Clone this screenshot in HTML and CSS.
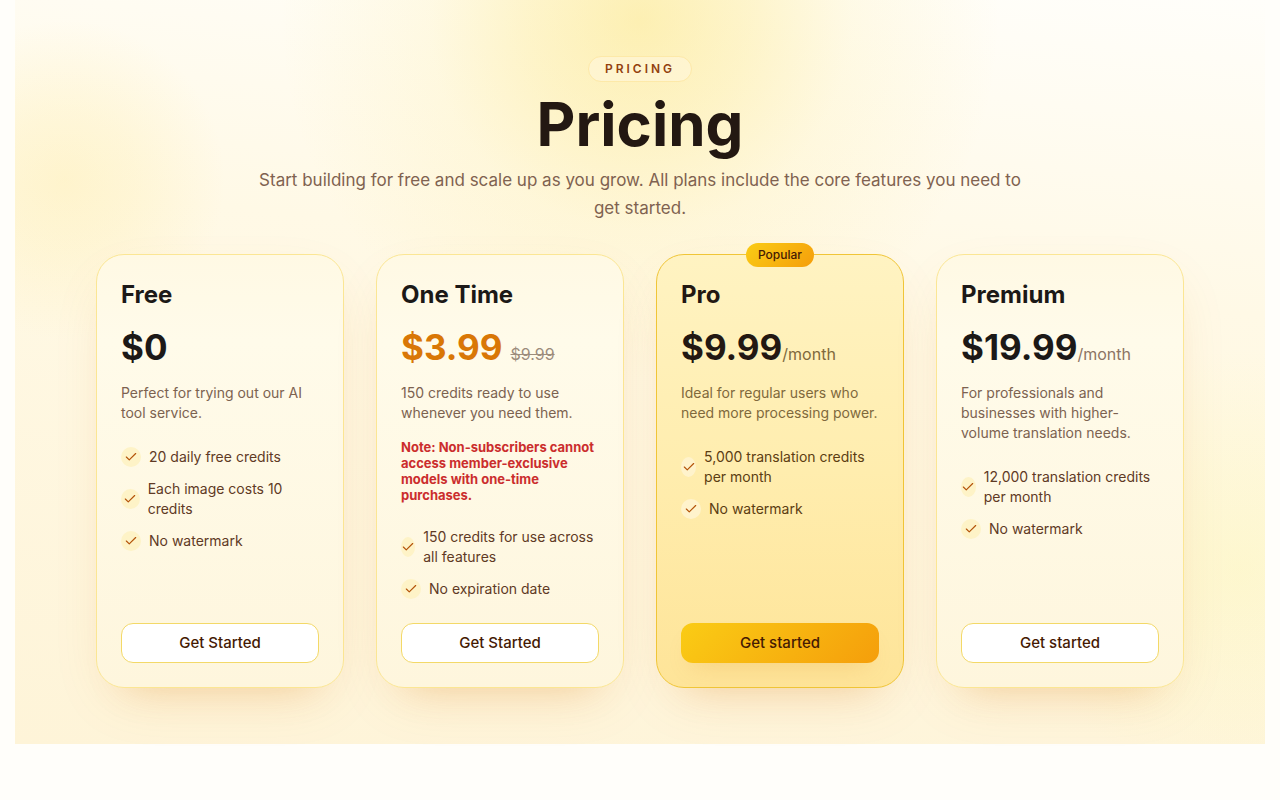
FILE: index.html
```html
<!DOCTYPE html>
<html lang="en">
<head>
  <meta charset="UTF-8">
  <meta name="viewport" content="width=device-width, initial-scale=1.0">
  <title>Pricing</title>
  <link rel="stylesheet" href="styles.css">
</head>
<body>
  <svg class="sprite" aria-hidden="true">
    <symbol id="check" viewBox="0 0 24 24">
      <path d="M20 6 9 17l-5-5" fill="none" stroke="currentColor" stroke-width="2" stroke-linecap="round" stroke-linejoin="round"/>
    </symbol>
  </svg>

  <section class="pricing" id="pricing">
    <header class="pricing-header">
      <span class="eyebrow">PRICING</span>
      <h1>Pricing</h1>
      <p>Start building for free and scale up as you grow. All plans include the core features you need to get started.</p>
    </header>

    <div class="plans">
      <article class="plan">
        <h2>Free</h2>
        <div class="price"><strong>$0</strong></div>
        <p class="description">Perfect for trying out our AI tool service.</p>
        <ul class="features">
          <li><span class="tick"><svg><use href="#check"/></svg></span><span>20 daily free credits</span></li>
          <li><span class="tick"><svg><use href="#check"/></svg></span><span>Each image costs 10 credits</span></li>
          <li><span class="tick"><svg><use href="#check"/></svg></span><span>No watermark</span></li>
        </ul>
        <button type="button" class="btn">Get Started</button>
      </article>

      <article class="plan">
        <h2>One Time</h2>
        <div class="price sale"><strong>$3.99</strong><del>$9.99</del></div>
        <p class="description">150 credits ready to use whenever you need them.</p>
        <p class="note">Note: Non-subscribers cannot access member-exclusive models with one-time purchases.</p>
        <ul class="features">
          <li><span class="tick"><svg><use href="#check"/></svg></span><span>150 credits for use across all features</span></li>
          <li><span class="tick"><svg><use href="#check"/></svg></span><span>No expiration date</span></li>
        </ul>
        <button type="button" class="btn">Get Started</button>
      </article>

      <article class="plan featured">
        <span class="badge">Popular</span>
        <h2>Pro</h2>
        <div class="price"><strong>$9.99</strong><span class="period">/month</span></div>
        <p class="description">Ideal for regular users who need more processing power.</p>
        <ul class="features">
          <li><span class="tick"><svg><use href="#check"/></svg></span><span>5,000 translation credits per month</span></li>
          <li><span class="tick"><svg><use href="#check"/></svg></span><span>No watermark</span></li>
        </ul>
        <button type="button" class="btn btn-primary">Get started</button>
      </article>

      <article class="plan">
        <h2>Premium</h2>
        <div class="price"><strong>$19.99</strong><span class="period">/month</span></div>
        <p class="description">For professionals and businesses with higher-volume translation needs.</p>
        <ul class="features">
          <li><span class="tick"><svg><use href="#check"/></svg></span><span>12,000 translation credits per month</span></li>
          <li><span class="tick"><svg><use href="#check"/></svg></span><span>No watermark</span></li>
        </ul>
        <button type="button" class="btn">Get started</button>
      </article>
    </div>
  </section>
</body>
</html>
```

FILE: styles.css
```css
* {
  box-sizing: border-box;
}
body {
  margin: 0;
  padding: 0 15px 56px;
  font-family: Inter, 'Liberation Sans', sans-serif;
  color: #1c1917;
  background: #fffefa;
}
h1, h2, p, ul {
  margin: 0;
  padding: 0;
}
.sprite {
  display: none;
}

/* Section */
.pricing {
  padding: 56px 24px;
  background:
    radial-gradient(circle at 50% 20px, rgba(250, 220, 80, 0.4), rgba(250, 220, 80, 0.26) 110px, rgba(250, 220, 80, 0.1) 210px, transparent 360px),
    radial-gradient(circle at 50px 180px, rgba(253, 230, 138, 0.28), rgba(253, 230, 138, 0.18) 70px, transparent 160px),
    radial-gradient(circle at 98% 570px, rgba(250, 248, 150, 0.24), transparent 220px),
    linear-gradient(186deg, #fffefa 0%, #fff9e6 36%, #fef4d8 100%);
}
.pricing-header {
  display: flex;
  flex-direction: column;
  align-items: center;
  gap: 12px;
  max-width: 780px;
  margin: 0 auto 32px;
  text-align: center;
}
.eyebrow {
  padding: 4px 16px;
  border: 1px solid #fde9a8;
  border-radius: 13px;
  background: rgba(255, 247, 220, 0.6);
  color: #92400e;
  font-size: 12px;
  line-height: 16px;
  font-weight: 600;
  letter-spacing: 3px;
}
.pricing-header h1 {
  font-size: 60px;
  line-height: 60px;
  font-weight: 700;
  color: #231812;
}
.pricing-header p {
  font-size: 17px;
  line-height: 28px;
  color: #7f6250;
}

/* Plan cards */
.plans {
  display: grid;
  grid-template-columns: repeat(4, 1fr);
  gap: 32px;
  max-width: 1088px;
  margin: 0 auto;
}
.plan {
  position: relative;
  display: flex;
  flex-direction: column;
  padding: 24px;
  border: 1px solid #fbe694;
  border-radius: 28px;
  background: linear-gradient(180deg, #fff9e4 0%, #fffbea 20%, #fef6dd 100%);
  box-shadow: 0 20px 60px -16px rgba(217, 119, 6, 0.14), 0 28px 36px -32px rgba(217, 119, 6, 0.25);
}
.plan h2 {
  font-size: 24px;
  line-height: 32px;
  font-weight: 700;
}
.price {
  display: flex;
  align-items: baseline;
  margin: 16px 0;
  font-size: 16px;
  line-height: 24px;
  color: #8c7464;
}
.price strong {
  font-size: 35px;
  line-height: 40px;
  font-weight: 700;
  color: #1c1917;
}
.price.sale {
  gap: 8px;
}
.price.sale strong {
  color: #d97706;
}
.price del {
  color: #9c8c7c;
}
.description {
  font-size: 14px;
  line-height: 20px;
  color: #7c6250;
}
.note {
  margin-top: 16px;
  font-size: 13px;
  line-height: 16px;
  font-weight: 700;
  color: #cb2d2d;
}
.features {
  display: flex;
  flex-direction: column;
  gap: 12px;
  margin: 24px 0;
  list-style: none;
  font-size: 14px;
  line-height: 20px;
  color: #5f3a25;
}
.features li {
  display: flex;
  align-items: center;
  gap: 8px;
}
.tick {
  display: flex;
  align-items: center;
  justify-content: center;
  width: 20px;
  height: 20px;
  border-radius: 50%;
  background: #fef3c7;
  color: #b45309;
}
.tick svg {
  flex: none;
  width: 14px;
  height: 14px;
}
.btn {
  width: 100%;
  height: 40px;
  margin-top: auto;
  border: 1px solid #f3d968;
  border-radius: 12px;
  background: #fff;
  color: #451a03;
  font-family: inherit;
  font-size: 15px;
  line-height: 20px;
  font-weight: 500;
  cursor: pointer;
}
.btn:hover {
  background: #fffbeb;
}

/* Highlighted plan */
.featured {
  border-color: #f0c537;
  background: linear-gradient(180deg, #fff3c2 0%, #ffedae 50%, #fee498 100%);
}
.featured h2,
.featured .price strong {
  color: #231812;
}
.featured .price,
.featured .description {
  color: #80693c;
}
.featured .features {
  color: #5c3d12;
}
.featured .tick {
  background: #fff3cc;
}
.badge {
  position: absolute;
  top: -12px;
  left: 50%;
  transform: translateX(-50%);
  padding: 4px 12px;
  border-radius: 12px;
  background: linear-gradient(135deg, #facc15, #f59e0b);
  color: #451a03;
  font-size: 12px;
  line-height: 16px;
  font-weight: 500;
}
.btn-primary,
.btn-primary:hover {
  border: 0;
  background: linear-gradient(135deg, #facc15, #f59e0b);
  box-shadow: 0 12px 24px -12px rgba(217, 119, 6, 0.25);
}

@media (max-width: 1000px) {
  .plans {
    grid-template-columns: repeat(2, 1fr);
  }
}
@media (max-width: 560px) {
  .plans {
    grid-template-columns: 1fr;
  }
}
```
